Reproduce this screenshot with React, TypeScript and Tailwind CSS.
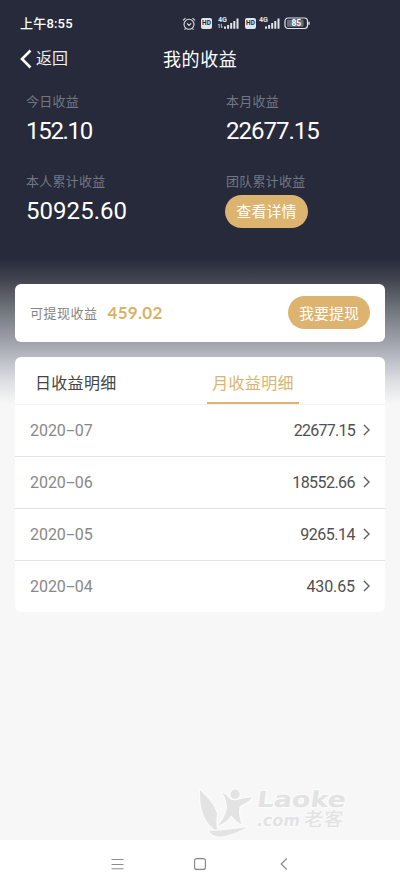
import React from "react";

const cn = "font-['Roboto','Noto_Sans_CJK_SC',sans-serif]";

function Stat({ label, value, width }: { label: string; value?: string; width?: string }) {
  return (
    <div className="h-20 w-[200px]">
      <div className="h-[22px] text-[13px] leading-[22px] tracking-[0.25px] text-[#737783]">{label}</div>
      {value ? (
        <div className={`h-9 text-[24px] leading-9 text-white ${width}`}>{value}</div>
      ) : (
        <button className="mt-[1.5px] -ml-px flex h-[33px] w-[83px] items-center justify-center rounded-full bg-[#dcb36f] pt-[2px] text-[15px] leading-none tracking-[0.1px] text-white">
          查看详情
        </button>
      )}
    </div>
  );
}

function Signal({ data }: { data?: boolean }) {
  return (
    <svg width="22" height="15" viewBox="0 0 22 15" fill="#e1e4ea">
      <text x="0" y="6" fontSize="6.5" fontWeight="700" fontFamily="Roboto" textLength="9" lengthAdjust="spacingAndGlyphs">4G</text>
      {data && <path d="M1.2 8.2v3.8M0 9.3l1.2-1.4M3.4 7.8v3.8M3.4 12l1.2-1.4" stroke="#e1e4ea" strokeWidth=".8" />}
      <path d="M6 10.6h2v2.2H6zM9.1 9h2v3.800h-2zM12.2 7h2v5.800h-2zM15.3 5h2v7.800h-2zM18.500 2.500h2v10.300h-2z" />
    </svg>
  );
}

function Hd() {
  return (
    <span className="flex h-[11px] w-[11px] items-center justify-center rounded-[2px] bg-[#e1e4ea] text-[6.5px] leading-none font-bold text-[#252a39]">
      HD
    </span>
  );
}

function StatusBar() {
  return (
    <div className="flex h-[47px] items-center pl-5 text-white">
      <span className="w-[162px] pt-px text-[13px] leading-5 font-medium tracking-[0.2px]">上午8:55</span>
      <svg width="14" height="14" viewBox="0 0 14 14" fill="none" stroke="#e1e4ea" strokeWidth="1.1">
        <circle cx="7" cy="7.3" r="5" />
        <path d="M1 3.4 3.5 1.2M13 3.4 10.5 1.2M5 6.4l2 2 2.2-2M3.5 11.5l-1 1.2M10.5 11.5l1 1.2" />
      </svg>
      <span className="ml-[5px]"><Hd /></span>
      <span className="ml-[6px]"><Signal data /></span>
      <span className="ml-[5px]"><Hd /></span>
      <span className="ml-[3px]"><Signal /></span>
      <svg className="ml-[3px]" width="27" height="13" viewBox="0 0 27 13">
        <rect x="1" y="1" width="22.5" height="10.5" rx="3" fill="#252a39" stroke="#e1e4ea" strokeWidth="1.2" />
        <rect x="3" y="2.8" width="16.5" height="7" rx="1" fill="#696e7a" />
        <path d="M25 4.8v3" stroke="#e1e4ea" strokeWidth="1.4" />
        <text x="12.3" y="9.3" textAnchor="middle" fontSize="8.5" fontWeight="700" fontFamily="Roboto" fill="#fff">85</text>
      </svg>
    </div>
  );
}

const rows = [
  { year: "2020", month: "07", value: "22677.15", track: "tracking-[-0.75px]" },
  { year: "2020", month: "06", value: "18552.66", track: "tracking-[-0.55px]" },
  { year: "2020", month: "05", value: "9265.14", track: "tracking-[-0.5px]" },
  { year: "2020", month: "04", value: "430.65", track: "tracking-[-0.1px]" },
];

function Watermark() {
  return (
    <svg width="156" height="56" viewBox="0 0 156 56" fill="#e3e3e3" stroke="#fbfbfb" strokeWidth="2.4" paintOrder="stroke" strokeLinejoin="round">
      <path d="M1 5C9 13 16 20 18 29C17 36 17 41 19 47C7 40 0 26 1 5Z" />
      <path d="M23.5 7.5C28 10 30 14.5 34 15C40 15 47 12 53 12.5C50 17 44 18.5 40.5 22C39 29 41 34 42.5 39C37 37 35 33 32 30.5C29 35 25 39 19 40.5C24 35 27 29 28 23C28 17 26 12 23.5 7.5Z" />
      <circle cx="36" cy="9.3" r="4.7" />
      <path d="M10 45.5C22 47 35 43 48 42.5C37 48 25 53 16 51C13 50 11 48 10 45.5Z" />
      <g fontFamily="DejaVu Sans" fontWeight="700">
        <text x="60" y="22" fontSize="22" textLength="89" lengthAdjust="spacingAndGlyphs" transform="skewX(-8)">Laoke</text>
        <text x="63" y="41" fontSize="16.5" textLength="43" lengthAdjust="spacingAndGlyphs" transform="skewX(-8)">.com</text>
      </g>
      <text x="108" y="41" fontSize="19" textLength="39" fontFamily="Noto Sans CJK SC" fontWeight="500" strokeWidth="1.5" transform="skewX(-5)">老客</text>
    </svg>
  );
}

export default function App() {
  return (
    <div className={`flex h-[888px] w-[400px] flex-col overflow-hidden bg-white ${cn}`}>
      <div className="flex h-[840px] flex-col bg-[#f7f7f7]">
        <div className="h-[404px] shrink-0 bg-[linear-gradient(180deg,#262a3a_0px,#262a3a_258px,#41444f_279px,#74787f_312px,#9fa1aa_341px,#b9bbc4_358px,#dcdde2_380px,#f7f7f7_404px)]">
          <StatusBar />
          <header className="flex h-[23px] items-center px-5 text-white">
            <svg width="13" height="20" viewBox="0 0 13 20" fill="none" stroke="#fff" strokeWidth="2.6">
              <path d="M10.5 1.5 2 10l8.5 8.5" />
            </svg>
            <span className="ml-[3px] w-[127px] text-[16px] leading-6 text-[#eeeeef]">返回</span>
            <h1 className="pt-[2px] text-[18px] leading-6 tracking-[0.6px]">我的收益</h1>
          </header>
          <section className="mt-[21px] ml-[26px] flex flex-wrap">
            <div className="flex">
              <Stat label="今日收益" value="152.10" width="tracking-[-1.3px]" />
              <Stat label="本月收益" value="22677.15" width="tracking-[-1px]" />
            </div>
            <div className="flex">
              <Stat label="本人累计收益" value="50925.60" width="tracking-[0.05px]" />
              <Stat label="团队累计收益" />
            </div>
          </section>
          <section className="mx-[15px] mt-[33px] flex h-[57.5px] items-center rounded-[6px] bg-white px-[15px]">
            <span className="pt-[2px] text-[13px] leading-5 tracking-[0.5px] text-[#858585]">可提现收益</span>
            <span className="ml-[10px] font-['Lato'] text-[17px] leading-5 font-bold tracking-[0.3px] text-[#d9b269]">459.02</span>
            <button className="ml-auto flex h-[33px] w-[82px] items-center justify-center rounded-full bg-[#dcb36f] pt-[3px] text-[15px] leading-none text-white">
              我要提现
            </button>
          </section>
          <section className="mx-[15px] mt-[15px] rounded-[6px] bg-white">
            <div className="flex h-[48px] border-b border-[#f2f2f2] text-[16px] leading-[54px]">
              <div className="ml-[20px] tracking-[0.3px] text-[#444]">日收益明细</div>
              <div className="ml-[90.5px] h-[47px] w-[92px] border-b-2 border-[#dcb36f] text-center tracking-[0.3px] text-[#d9b571]">月收益明细</div>
            </div>
            {rows.map((r, i) => (
              <div
                key={r.month}
                className={`flex items-center px-[15px] text-[16px] ${i < 3 ? "h-[52px] border-b border-[#e4e4e4]" : "h-[51px]"}`}
              >
                <span className="pt-[2px] tracking-[-0.05px] text-[#888]">
                  {r.year}
                  <span className="inline-block w-[9px] scale-x-[1.9] text-center">-</span>
                  {r.month}
                </span>
                <span className={`ml-auto pt-[2px] text-[#505050] ${r.track}`}>{r.value}</span>
                <svg className="-mr-px ml-[7px]" width="9" height="12" viewBox="0 0 9 12" fill="none" stroke="#606060" strokeWidth="1.4">
                  <path d="m2 1 5 5-5 5" />
                </svg>
              </div>
            ))}
          </section>
        </div>
        <div className="mt-auto ml-[199px] h-[55px]"><Watermark /></div>
      </div>
      <nav className="flex h-[48px] items-center justify-between pr-[112px] pl-[111px]">
        <svg width="13" height="12" viewBox="0 0 13 12" stroke="#8c8c8c"><path d="M.5 1.5h12M.5 6.5h12M.5 10.8h12" /></svg>
        <svg className="-ml-[5px]" width="12" height="12" viewBox="0 0 12 12" fill="none" stroke="#858585" strokeWidth="1.1"><rect x=".6" y=".6" width="10.8" height="10.8" rx="2" /></svg>
        <svg width="8" height="12" viewBox="0 0 8 12" fill="none" stroke="#858585" strokeWidth="1.1"><path d="M6.8.5 1.2 6l5.6 5.5" /></svg>
      </nav>
    </div>
  );
}
